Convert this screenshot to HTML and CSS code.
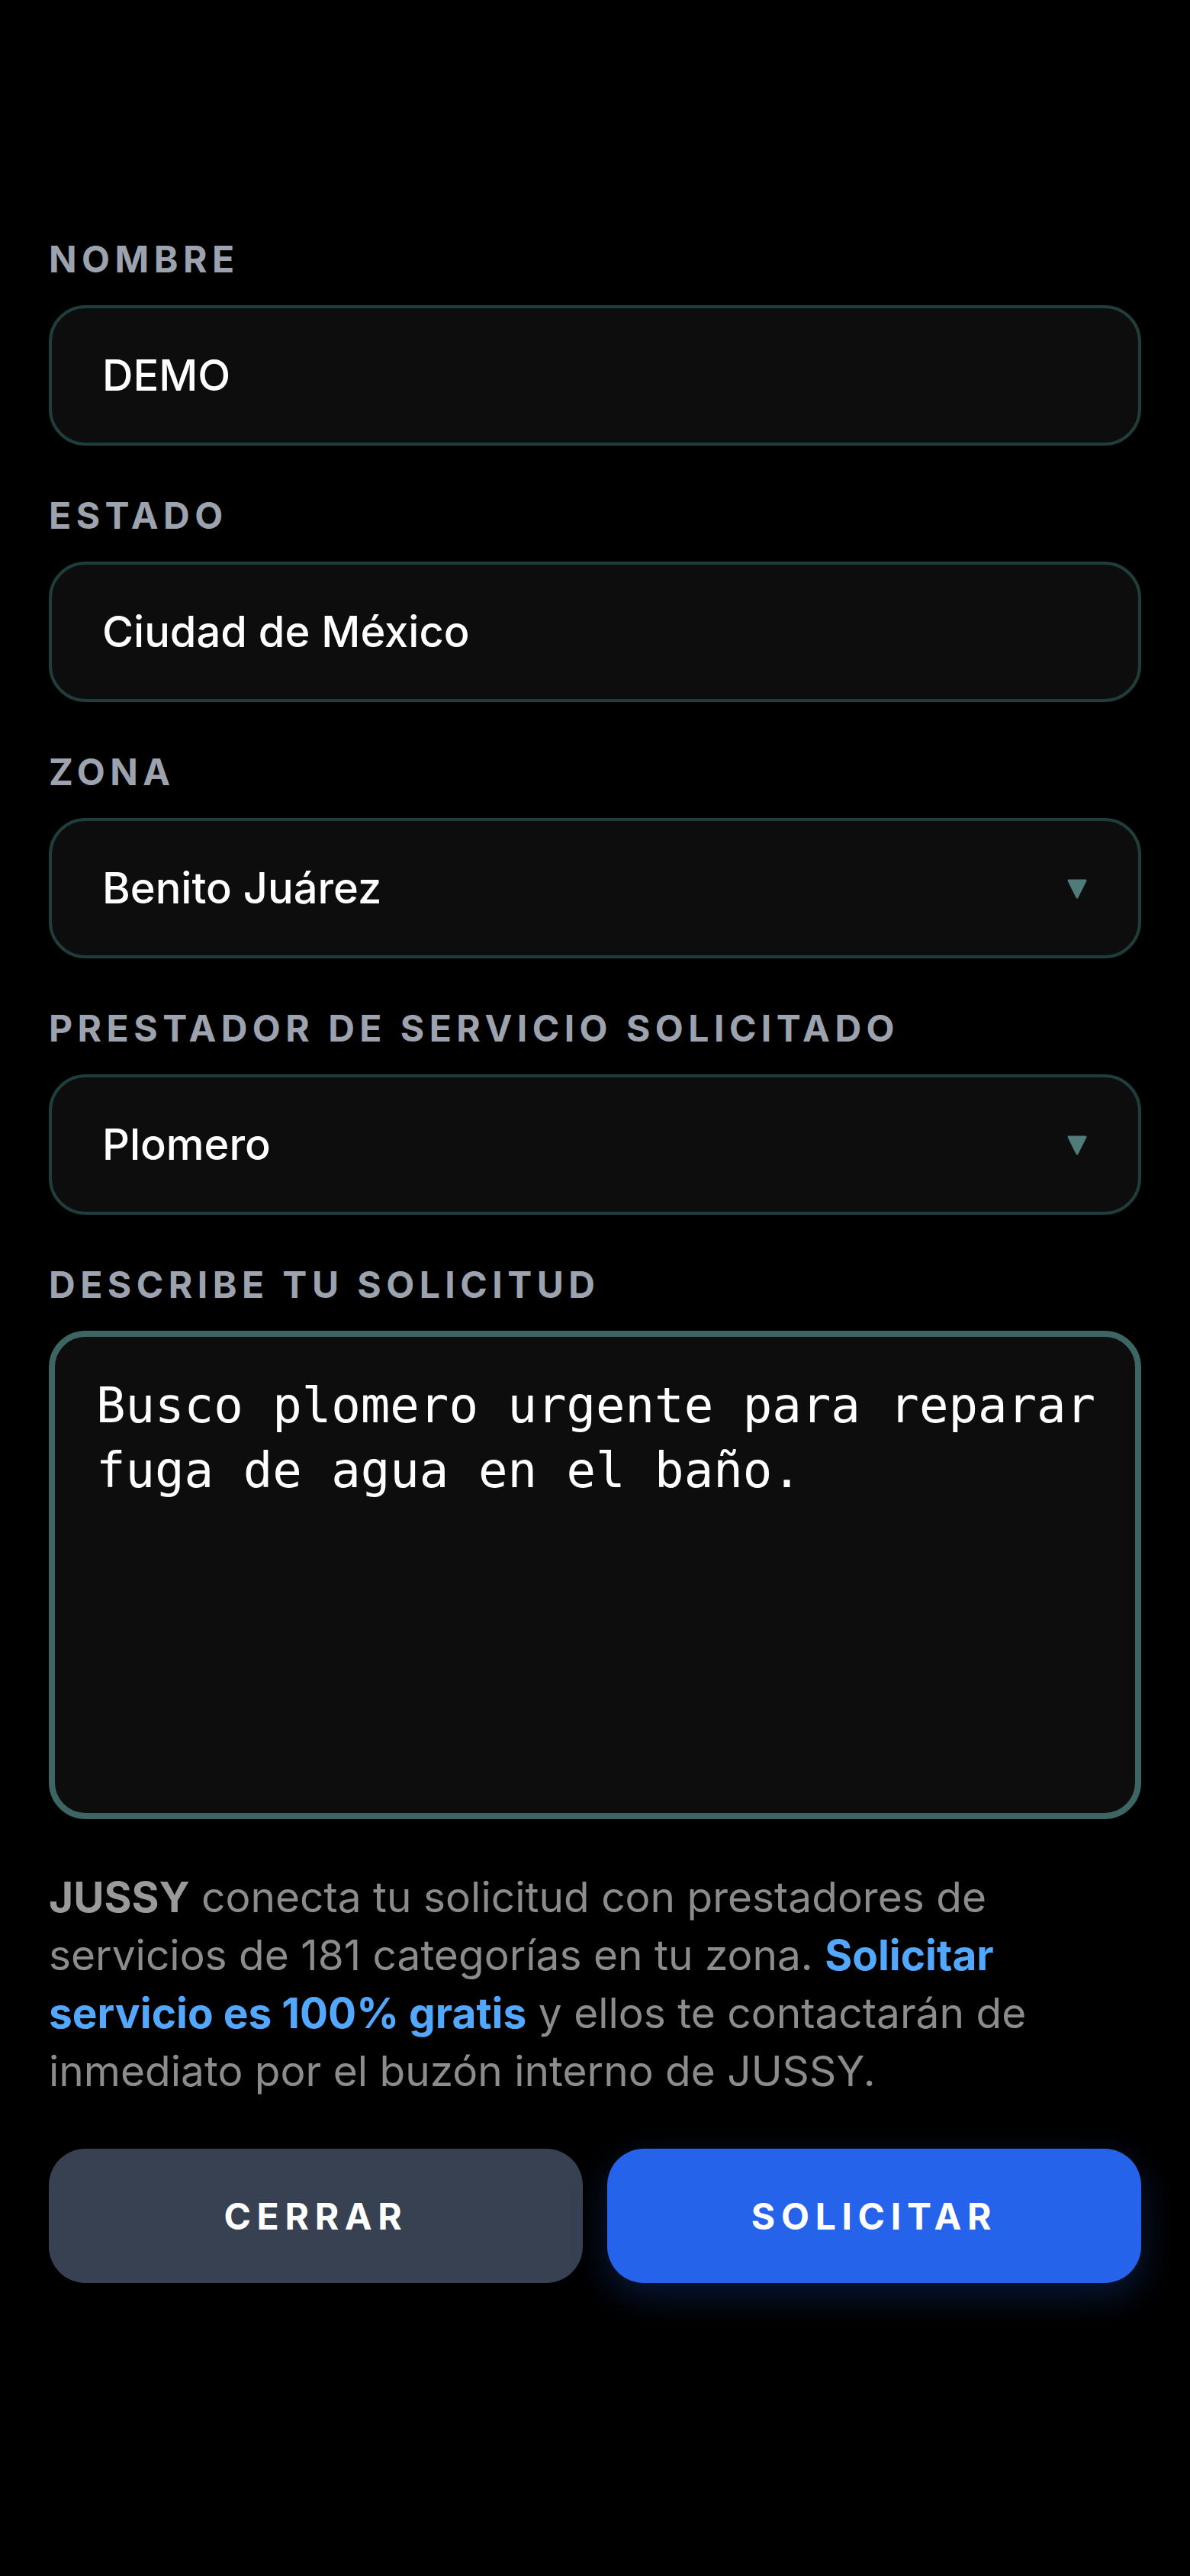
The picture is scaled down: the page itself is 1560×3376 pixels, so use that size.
FILE: index.html
```html
<!DOCTYPE html>
<html lang="es">
<head>
    <meta charset="UTF-8">
    <meta name="viewport" content="width=device-width, initial-scale=1.0">
    <title>Solicitar servicio</title>
    <link rel="stylesheet" href="styles.css">
</head>
<body>
    <div class="container">
        <!-- Datos del solicitante -->
        <div class="field">
            <label class="label" for="nombre">Nombre</label>
            <div class="input" id="nombre">DEMO</div>
        </div>

        <div class="field">
            <label class="label" for="estado">Estado</label>
            <div class="input" id="estado">Ciudad de México</div>
        </div>

        <div class="field">
            <label class="label" for="zona">Zona</label>
            <div class="input select" id="zona">
                <span>Benito Juárez</span>
                <svg class="arrow" viewBox="0 0 32 32" width="32" height="32">
                    <polygon points="5,6 27,6 16,28" />
                </svg>
            </div>
        </div>

        <div class="field">
            <label class="label" for="prestador">Prestador de servicio solicitado</label>
            <div class="input select" id="prestador">
                <span>Plomero</span>
                <svg class="arrow" viewBox="0 0 32 32" width="32" height="32">
                    <polygon points="5,6 27,6 16,28" />
                </svg>
            </div>
        </div>

        <div class="field">
            <label class="label" for="solicitud">Describe tu solicitud</label>
            <textarea id="solicitud" class="textarea">Busco plomero urgente para reparar
fuga de agua en el baño.</textarea>
        </div>

        <p class="info">
            <strong>JUSSY</strong> conecta tu solicitud con prestadores de servicios de 181 categorías en tu zona.
            <span class="highlight">Solicitar servicio es 100% gratis</span> y ellos te contactarán de inmediato por el buzón interno de JUSSY.
        </p>

        <div class="button-container">
            <button id="cerrar">Cerrar</button>
            <button id="solicitar">Solicitar</button>
        </div>
    </div>
</body>
</html>
```

FILE: styles.css
```css
body {
    margin: 0;
    background-color: #000;
    font-family: Inter, "Noto Sans", sans-serif;
    color: #fff;
}

.container {
    padding: 312px 64px 200px;
}

.field {
    margin-bottom: 64px;
}

.label {
    display: block;
    font-size: 48px;
    line-height: 56px;
    font-weight: 700;
    letter-spacing: 0.135em;
    text-transform: uppercase;
    color: #9ca3af;
    margin-bottom: 32px;
}

.input {
    box-sizing: border-box;
    height: 184px;
    display: flex;
    align-items: center;
    justify-content: space-between;
    padding: 0 64px 0 66px;
    background-color: #0d0d0d;
    border: 4px solid #1f3d3c;
    border-radius: 48px;
    font-size: 56px;
    font-weight: 500;
}

.arrow polygon {
    fill: #4f7b7a;
    stroke: #4f7b7a;
    stroke-width: 3;
    stroke-linejoin: round;
}

.textarea {
    display: block;
    box-sizing: border-box;
    width: 100%;
    height: 640px;
    padding: 48px 36px 48px 54px;
    background-color: #0d0d0d;
    border: 8px solid #3c6564;
    border-radius: 48px;
    color: #fff;
    font-family: "DejaVu Sans Mono", monospace;
    font-size: 64px;
    line-height: 85px;
    resize: none;
    overflow: hidden;
    outline: none;
}

.info {
    max-width: 1420px;
    margin: 0 0 64px;
    font-size: 55px;
    line-height: 76px;
    color: #8c8c8c;
}

.info strong {
    color: #9a9a9a;
}

.highlight {
    color: #52a8ff;
    font-weight: 700;
}

.button-container {
    display: flex;
    gap: 32px;
}

button {
    flex: 1;
    height: 176px;
    border: none;
    border-radius: 48px;
    font-family: Inter, "Noto Sans", sans-serif;
    font-size: 48px;
    font-weight: 700;
    letter-spacing: 0.16em;
    text-transform: uppercase;
    color: #fff;
    cursor: pointer;
}

#cerrar {
    background-color: #374151;
}

#solicitar {
    background-color: #2563eb;
    box-shadow: 0 16px 48px rgba(37, 99, 235, 0.25);
}
```
